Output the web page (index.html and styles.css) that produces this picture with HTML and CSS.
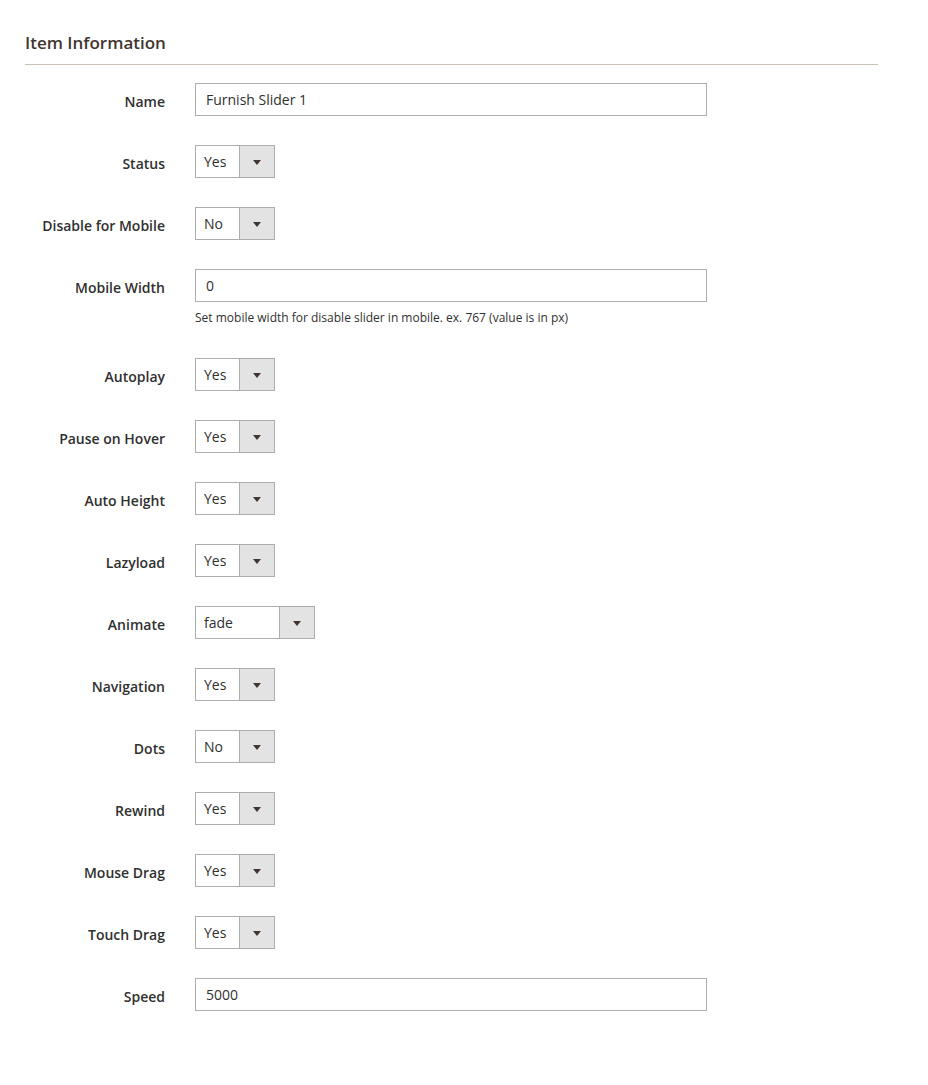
FILE: index.html
```html
<!DOCTYPE html>
<html lang="en">
<head>
  <meta charset="UTF-8" />
  <title>Item Information</title>
  <link rel="stylesheet" href="styles.css">
</head>
<body>
  <div class="fieldset">
    <h2 class="fieldset-title">Item Information</h2>

    <div class="field">
      <label class="field-label">Name</label>
      <div class="field-control">
        <input class="input-text" type="text" value="Furnish Slider 1" />
      </div>
    </div>

    <div class="field">
      <label class="field-label">Status</label>
      <div class="field-control">
        <div class="select"><span class="select-value">Yes</span><span class="select-arrow"></span></div>
      </div>
    </div>

    <div class="field">
      <label class="field-label">Disable for Mobile</label>
      <div class="field-control">
        <div class="select"><span class="select-value">No</span><span class="select-arrow"></span></div>
      </div>
    </div>

    <div class="field">
      <label class="field-label">Mobile Width</label>
      <div class="field-control">
        <input class="input-text" type="text" value="0" />
        <div class="field-note">Set mobile width for disable slider in mobile. ex. 767 (value is in px)</div>
      </div>
    </div>

    <div class="field">
      <label class="field-label">Autoplay</label>
      <div class="field-control">
        <div class="select"><span class="select-value">Yes</span><span class="select-arrow"></span></div>
      </div>
    </div>

    <div class="field">
      <label class="field-label">Pause on Hover</label>
      <div class="field-control">
        <div class="select"><span class="select-value">Yes</span><span class="select-arrow"></span></div>
      </div>
    </div>

    <div class="field">
      <label class="field-label">Auto Height</label>
      <div class="field-control">
        <div class="select"><span class="select-value">Yes</span><span class="select-arrow"></span></div>
      </div>
    </div>

    <div class="field">
      <label class="field-label">Lazyload</label>
      <div class="field-control">
        <div class="select"><span class="select-value">Yes</span><span class="select-arrow"></span></div>
      </div>
    </div>

    <div class="field">
      <label class="field-label">Animate</label>
      <div class="field-control">
        <div class="select select-wide"><span class="select-value">fade</span><span class="select-arrow"></span></div>
      </div>
    </div>

    <div class="field">
      <label class="field-label">Navigation</label>
      <div class="field-control">
        <div class="select"><span class="select-value">Yes</span><span class="select-arrow"></span></div>
      </div>
    </div>

    <div class="field">
      <label class="field-label">Dots</label>
      <div class="field-control">
        <div class="select"><span class="select-value">No</span><span class="select-arrow"></span></div>
      </div>
    </div>

    <div class="field">
      <label class="field-label">Rewind</label>
      <div class="field-control">
        <div class="select"><span class="select-value">Yes</span><span class="select-arrow"></span></div>
      </div>
    </div>

    <div class="field">
      <label class="field-label">Mouse Drag</label>
      <div class="field-control">
        <div class="select"><span class="select-value">Yes</span><span class="select-arrow"></span></div>
      </div>
    </div>

    <div class="field">
      <label class="field-label">Touch Drag</label>
      <div class="field-control">
        <div class="select"><span class="select-value">Yes</span><span class="select-arrow"></span></div>
      </div>
    </div>

    <div class="field">
      <label class="field-label">Speed</label>
      <div class="field-control">
        <input class="input-text" type="text" value="5000" />
      </div>
    </div>
  </div>
</body>
</html>
```

FILE: styles.css
```css
body {
  margin: 0;
  background: #fff;
  font-family: "Open Sans", "Liberation Sans", sans-serif;
  color: #303030;
  font-size: 14px;
}
.fieldset {
  width: 853px;
  margin-left: 25px;
  padding-top: 31px;
}
.fieldset-title {
  margin: 0 0 18px;
  padding-bottom: 9px;
  border-bottom: 1px solid #cac3b4;
  font-size: 17px;
  line-height: 24px;
  font-weight: 600;
  color: #41362f;
}
.field {
  display: flex;
  align-items: flex-start;
  margin-bottom: 29px;
}
.field-label {
  width: 140px;
  margin-right: 30px;
  padding-top: 9px;
  line-height: 19px;
  text-align: right;
  font-weight: 600;
  color: #303030;
}
.field-control {
  width: 512px;
}
.input-text {
  display: block;
  width: 100%;
  height: 33px;
  box-sizing: border-box;
  padding: 0 10px;
  border: 1px solid #adadad;
  border-radius: 0;
  font-family: inherit;
  font-size: 14px;
  color: #303030;
  background: #fff;
  outline: none;
}
.field-note {
  margin-top: 5px;
  font-size: 12px;
  line-height: 22px;
  color: #303030;
}
.select {
  display: flex;
  width: 80px;
  height: 33px;
  box-sizing: border-box;
  border: 1px solid #adadad;
  background: #fff;
}
.select-wide {
  width: 120px;
}
.select-value {
  flex: 1;
  padding-left: 8px;
  line-height: 31px;
  color: #303030;
}
.select-arrow {
  position: relative;
  width: 34px;
  border-left: 1px solid #adadad;
  background: #e3e3e3;
}
.select-arrow::after {
  content: "";
  position: absolute;
  left: 13px;
  top: 14px;
  border-left: 4px solid transparent;
  border-right: 4px solid transparent;
  border-top: 5px solid #41362f;
}
```
